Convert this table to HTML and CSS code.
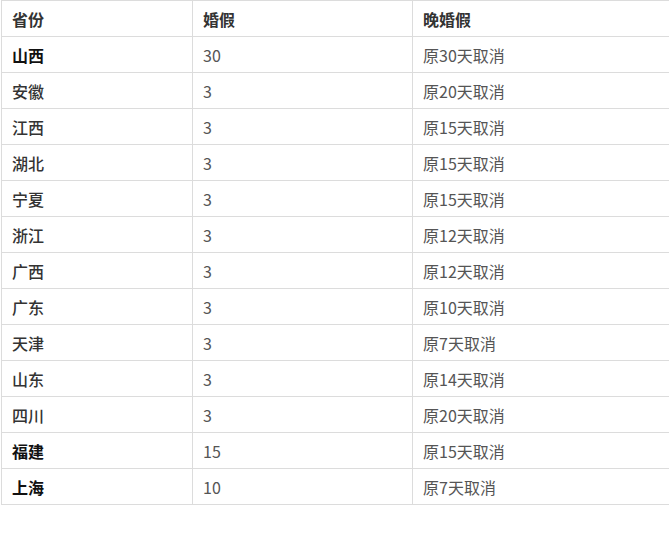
FILE: index.html
```html
<!DOCTYPE html>
<html lang="zh-CN">
<head>
<meta charset="utf-8">
<link rel="stylesheet" href="styles.css">
</head>
<body>
<table class="leave-table">
  <colgroup>
    <col class="col-prov">
    <col class="col-days">
    <col class="col-late">
  </colgroup>
  <thead>
    <tr><th>省份</th><th>婚假</th><th>晚婚假</th></tr>
  </thead>
  <tbody>
    <tr><td class="prov strong">山西</td><td>30</td><td>原30天取消</td></tr>
    <tr><td class="prov">安徽</td><td>3</td><td>原20天取消</td></tr>
    <tr><td class="prov">江西</td><td>3</td><td>原15天取消</td></tr>
    <tr><td class="prov">湖北</td><td>3</td><td>原15天取消</td></tr>
    <tr><td class="prov">宁夏</td><td>3</td><td>原15天取消</td></tr>
    <tr><td class="prov">浙江</td><td>3</td><td>原12天取消</td></tr>
    <tr><td class="prov">广西</td><td>3</td><td>原12天取消</td></tr>
    <tr><td class="prov">广东</td><td>3</td><td>原10天取消</td></tr>
    <tr><td class="prov">天津</td><td>3</td><td>原7天取消</td></tr>
    <tr><td class="prov">山东</td><td>3</td><td>原14天取消</td></tr>
    <tr><td class="prov">四川</td><td>3</td><td>原20天取消</td></tr>
    <tr><td class="prov strong">福建</td><td>15</td><td>原15天取消</td></tr>
    <tr><td class="prov strong">上海</td><td>10</td><td>原7天取消</td></tr>
  </tbody>
</table>
</body>
</html>
```
FILE: styles.css
```css
html, body {
  margin: 0;
  padding: 0;
  background: #ffffff;
}
body {
  overflow: hidden;
  font-family: "Noto Sans CJK SC", "Noto Sans", sans-serif;
}
.leave-table {
  border-collapse: collapse;
  table-layout: fixed;
  width: 668px;
  margin-left: 1px;
  font-size: 16px;
}
.col-prov { width: 191px; }
.col-days { width: 220px; }
.col-late { width: 257px; }
.leave-table th,
.leave-table td {
  border: 1px solid #dcdcdc;
  height: 36px;
  padding: 1px 10px 0 10px;
  box-sizing: border-box;
  line-height: 20px;
  text-align: left;
  vertical-align: middle;
  color: #555;
  font-weight: 400;
  white-space: nowrap;
}
.leave-table th:last-child,
.leave-table td:last-child {
  border-right-color: transparent;
}
.leave-table th {
  font-weight: 700;
  color: #333;
}
.leave-table td.prov {
  color: #333;
  font-weight: 500;
}
.leave-table td.prov.strong {
  color: #111;
  font-weight: 700;
}
```
